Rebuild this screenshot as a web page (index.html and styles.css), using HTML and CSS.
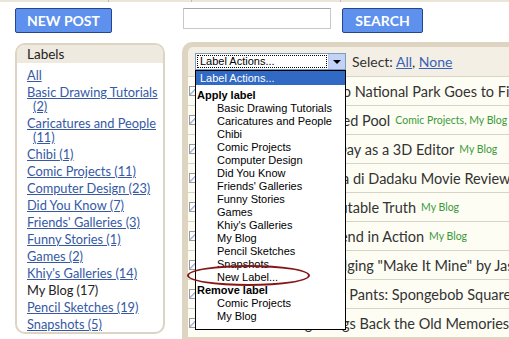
FILE: index.html
```html
<!DOCTYPE html>
<html lang="en">
<head>
    <meta charset="UTF-8">
    <title>Edit Posts</title>
    <link rel="stylesheet" href="styles.css">
</head>
<body>
    <div class="tabline">
        <span style="width:108px"></span>
        <span style="width:82px"></span>
        <span style="width:148px"></span>
    </div>

    <div class="topbar">
        <button class="btn new-post">NEW POST</button>
        <input class="search" type="text">
        <button class="btn search-btn">SEARCH</button>
    </div>

    <div class="layout">
        <aside class="labels">
            <h2>Labels</h2>
            <ul>
                <li><a href="#">All</a></li>
                <li><a href="#">Basic Drawing Tutorials (2)</a></li>
                <li><a href="#">Caricatures and People (11)</a></li>
                <li><a href="#">Chibi (1)</a></li>
                <li><a href="#">Comic Projects (11)</a></li>
                <li><a href="#">Computer Design (23)</a></li>
                <li><a href="#">Did You Know (7)</a></li>
                <li><a href="#">Friends' Galleries (3)</a></li>
                <li><a href="#">Funny Stories (1)</a></li>
                <li><a href="#">Games (2)</a></li>
                <li><a href="#">Khiy's Galleries (14)</a></li>
                <li class="current">My Blog (17)</li>
                <li><a href="#">Pencil Sketches (19)</a></li>
                <li><a href="#">Snapshots (5)</a></li>
            </ul>
        </aside>

        <main class="posts">
            <div class="toolbar">
                <div class="select">
                    <span class="select-text">Label Actions...</span>
                    <span class="select-arrow"></span>
                </div>
                <span class="select-links">Select: <a href="#">All</a>, <a href="#">None</a></span>

                <ul class="dropdown">
                    <li class="highlight">Label Actions...</li>
                    <li class="group first">Apply label</li>
                    <li>Basic Drawing Tutorials</li>
                    <li>Caricatures and People</li>
                    <li>Chibi</li>
                    <li>Comic Projects</li>
                    <li>Computer Design</li>
                    <li>Did You Know</li>
                    <li>Friends' Galleries</li>
                    <li>Funny Stories</li>
                    <li>Games</li>
                    <li>Khiy's Galleries</li>
                    <li>My Blog</li>
                    <li>Pencil Sketches</li>
                    <li>Snapshots</li>
                    <li>New Label...</li>
                    <li class="group">Remove label</li>
                    <li>Comic Projects</li>
                    <li>My Blog</li>
                </ul>
                <div class="circle"></div>
            </div>

            <div class="row"><span class="check"></span><span class="title">Our Family Trip to Yoho National Park Goes to Final</span><span class="tags">My Blog</span></div>
            <div class="row"><span class="check"></span><span class="title">A Day at the Abandoned Pool</span><span class="tags">Comic Projects, My Blog</span></div>
            <div class="row"><span class="check"></span><span class="title">Spending Your Work Day as a 3D Editor</span><span class="tags">My Blog</span></div>
            <div class="row"><span class="check"></span><span class="title">Films: Ketika Ada Cinta di Dadaku Movie Review</span><span class="tags">My Blog</span></div>
            <div class="row"><span class="check"></span><span class="title">Fact Check: An Indisputable Truth</span><span class="tags">My Blog</span></div>
            <div class="row"><span class="check"></span><span class="title">Watching My Best Friend in Action</span><span class="tags">My Blog</span></div>
            <div class="row"><span class="check"></span><span class="title">Arts Contest Time: Judging "Make It Mine" by Jason</span><span class="tags">My Blog</span></div>
            <div class="row"><span class="check"></span><span class="title">Comic Strip #12 Fancy Pants: Spongebob Squarepants</span><span class="tags">My Blog</span></div>
            <div class="row"><span class="check"></span><span class="title">Retro PC Gaming Brings Back the Old Memories</span><span class="tags">My Blog</span></div>
        </main>
    </div>
</body>
</html>
```

FILE: styles.css
```css
body {
    margin: 0;
    width: 509px;
    height: 339px;
    overflow: hidden;
    font-family: Lato, "Open Sans", sans-serif;
    color: #333;
    background: #fff;
}
a {
    color: #3559a5;
}
.tabline {
    display: flex;
    height: 2px;
    background: #ebe6da;
}
.tabline span {
    border-right: 1px solid #c4bba8;
}
.topbar {
    display: flex;
    align-items: flex-start;
    padding: 6px 0 0 15px;
}
.btn {
    height: 25px;
    padding: 0;
    background: #5e90ee;
    border: 1px solid #26458c;
    border-radius: 2px;
    color: #fff;
    font-family: Lato, sans-serif;
    font-weight: bold;
    font-size: 14px;
}
.new-post {
    width: 97px;
}
.search-btn {
    width: 81px;
    margin-left: 11px;
}
.search {
    width: 148px;
    height: 21px;
    box-sizing: border-box;
    margin: 0 0 0 71px;
    border: 1px solid #c9c9c9;
    border-top-color: #a9a9a9;
}
.layout {
    display: flex;
    align-items: flex-start;
    margin-top: 9px;
}
.labels {
    width: 150px;
    height: 291px;
    box-sizing: border-box;
    margin: 1px 0 0 15px;
    border: 2px solid #ddd4c3;
    border-radius: 10px;
    overflow: hidden;
}
.labels h2 {
    margin: 0;
    height: 18px;
    padding-left: 10px;
    background: #efeadf;
    font-size: 13.5px;
    font-weight: normal;
    line-height: 18px;
    color: #222;
}
.labels ul {
    list-style: none;
    margin: 0;
    padding: 5px 2px 0 10px;
    font-size: 12.8px;
    line-height: 14px;
}
.labels li {
    margin-bottom: 3px;
    padding-left: 6px;
    text-indent: -6px;
}
.labels li.current {
    color: #222;
}
.posts {
    flex: 1;
    min-width: 0;
    height: 297px;
    margin-left: 17px;
    padding: 5px 0 0 6px;
    background: #ddd4c2;
    border-radius: 10px 0 0 0;
    overflow: hidden;
}
.toolbar {
    position: relative;
    display: flex;
    align-items: center;
    padding: 6px 0 6px 7px;
    background: #f3efe5;
    border-radius: 5px 0 0 0;
}
.select {
    display: flex;
    width: 151px;
    height: 17px;
    box-sizing: border-box;
    border: 1px solid #7f9db9;
    background: #fff;
    font-family: "Liberation Sans", Arial, sans-serif;
    font-size: 11px;
    color: #000;
}
.select-text {
    flex: 1;
    margin: 1px;
    padding-left: 3px;
    outline: 1px dotted #000;
    outline-offset: -1px;
    line-height: 13px;
}
.select-arrow {
    position: relative;
    width: 16px;
    background: #c3d3f8;
    border-left: 1px solid #b9c9ef;
}
.select-arrow::after {
    content: "";
    position: absolute;
    left: 4px;
    top: 6px;
    border: 4px solid transparent;
    border-top: 4px solid #000;
    border-bottom: none;
}
.select-links {
    margin-left: 6px;
    font-size: 14px;
}
.select-links a {
    color: #3a63b8;
}
.dropdown {
    position: absolute;
    left: 7px;
    top: 23px;
    z-index: 2;
    width: 151px;
    box-sizing: border-box;
    margin: 0;
    padding: 0 0 6px;
    list-style: none;
    background: #fff;
    border: 1px solid #000;
    font-family: "Liberation Sans", Arial, sans-serif;
    font-size: 11px;
    line-height: 13px;
    color: #000;
}
.dropdown li {
    padding-left: 21px;
    white-space: nowrap;
}
.dropdown li.highlight {
    padding-left: 4px;
    line-height: 14px;
    background: #316ac5;
    color: #fff;
}
.dropdown li.group {
    padding-left: 1px;
    font-weight: bold;
}
.dropdown li.group.first {
    margin-top: 3px;
    line-height: 14px;
}
.circle {
    position: absolute;
    left: -1px;
    top: 218px;
    z-index: 3;
    width: 123px;
    height: 21px;
    box-sizing: border-box;
    border: 2px solid #861717;
    border-radius: 50%;
}
.row {
    display: flex;
    align-items: center;
    height: 28px;
    border-top: 1px solid #d6d3c8;
    background: #fdfdf4;
    white-space: nowrap;
}
.check {
    flex: none;
    width: 10px;
    height: 10px;
    margin: 0 4px 0 1px;
    border: 1px solid #9a9a9a;
    box-sizing: border-box;
    background: linear-gradient(135deg, #fff 40%, #8da4cf 45%, #fff 60%);
}
.title {
    font-size: 14.5px;
    color: #333;
}
.tags {
    margin-left: 5px;
    font-size: 10.5px;
    color: #3a9a3a;
}
```
